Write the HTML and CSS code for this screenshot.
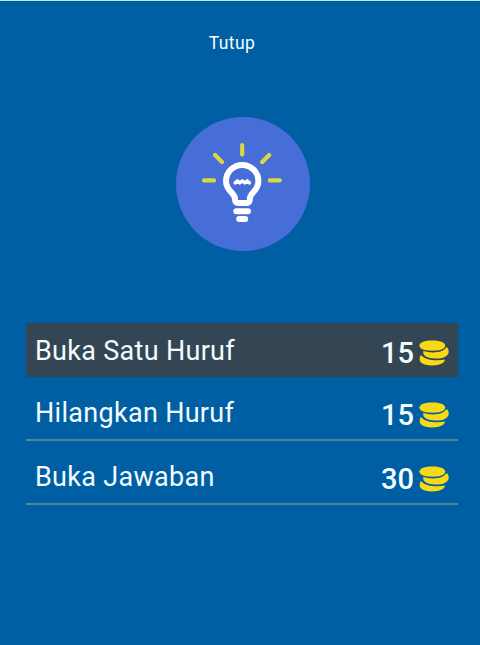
FILE: index.html
```html
<!DOCTYPE html>
<html lang="id">
    <head>
        <meta charset="utf-8" />
        <title>Bantuan</title>
        <link rel="stylesheet" href="styles.css">
    </head>

    <body>
        <!-- Shared coin icon -->
        <svg class="sprite" aria-hidden="true">
            <symbol id="coins" viewBox="0 0 30 26">
                <path d="M2.2 15.2 C0.9 16 0.7 17 0.7 19.6 C0.7 23.2 5.5 25.4 13.2 25.4 C20.5 25.4 25.8 23.4 25.9 19.6 C18 21 7 20.6 2.2 15.2 Z" />
                <path d="M27.2 7 C26 10.6 20.5 12.4 14 12.4 C10.4 12.4 7 12 4.4 11.1 C3 15.6 8.5 18.6 16.5 18.6 C24.5 18.6 29.7 16 29.7 11.4 C29.7 9.4 28.8 7.8 27.2 7 Z" />
                <path d="M13.4 0.4 C20.5 0.4 26.2 2.3 26.2 5.6 C26.2 9.2 21 10.8 13.4 10.8 C5.8 10.8 0.4 9.2 0.4 5.6 C0.4 2.3 6 0.4 13.4 0.4 Z" />
            </symbol>
        </svg>

        <div class="close">Tutup</div>

        <svg class="bulb" viewBox="0 0 134 134">
            <circle class="disc" cx="67" cy="67" r="67" />
            <path class="rays" d="M66.2 28.2 V37.6 M39 38 L46 45 M93.2 38 L86.2 45 M28 63.4 H38 M93.7 63.4 H103.8" />
            <path class="glass" d="M59 82 C59 75.5 50 74 50 64.2 A16.2 16.2 0 0 1 82.4 64.2 C82.4 74 73.8 75.5 73.8 82 Q73.8 86 70.4 86 H62.4 Q59 86 59 82 Z" />
            <path class="filament" d="M59 66 L61.4 63.8 L63.8 66 L66.3 63.8 L68.8 66 L71.3 63.8 L73.6 66" />
            <path class="base" d="M60.3 94.3 H72 M63.2 102.1 H69.2" />
        </svg>

        <div class="menu">
            <div class="item selected">
                <span class="label">Buka Satu Huruf</span>
                <span class="price">15</span>
                <svg class="coins"><use href="#coins" /></svg>
            </div>
            <div class="item">
                <span class="label">Hilangkan Huruf</span>
                <span class="price">15</span>
                <svg class="coins"><use href="#coins" /></svg>
            </div>
            <div class="item">
                <span class="label">Buka Jawaban</span>
                <span class="price">30</span>
                <svg class="coins"><use href="#coins" /></svg>
            </div>
        </div>
    </body>
</html>
```
FILE: styles.css
```css
body {
    margin: 0px;
    height: 645px;
    box-sizing: border-box;
    border-top: 1px solid #c5e3e8;
    background-color: #005fa3;
    color: #f2fcff;
    font-family: Roboto, sans-serif;
    overflow: hidden;
}

.sprite {
    display: none;
}

.close {
    margin-top: 32px;
    padding-right: 16px;
    text-align: center;
    font-size: 17.5px;
    letter-spacing: 0.4px;
    line-height: 20px;
}

.bulb {
    display: block;
    width: 134px;
    height: 134px;
    margin: 64px 0 0 176px;
    fill: none;
    stroke: white;
    stroke-linecap: round;
    stroke-linejoin: round;

    .disc {
        fill: #476dd7;
        stroke: none;
    }

    .rays {
        stroke: #dcd743;
        stroke-width: 4.2px;
    }

    .glass,
    .base {
        stroke-width: 6px;
    }

    .filament {
        stroke-width: 3.2px;
    }
}

.menu {
    margin: 72px 22px 0 26px;
}

.item {
    display: flex;
    align-items: center;
    box-sizing: border-box;
    height: 64px;
    padding: 8px 9px 0 9px;
    border-bottom: 2px solid #4f829b;
}

.item.selected {
    height: 54px;
    padding-top: 0px;
    border-bottom: 0px;
    background-color: #344653;
}

.label {
    flex: 1;
    padding-top: 2px;
    font-size: 27px;
    letter-spacing: 0.3px;
    line-height: 32px;
}

.price {
    margin-right: 5px;
    padding-top: 6px;
    font-size: 29px;
    font-weight: 500;
    line-height: 32px;
}

.coins {
    width: 30px;
    height: 26px;
    margin-top: 6px;
    fill: #f8d916;
}
```
